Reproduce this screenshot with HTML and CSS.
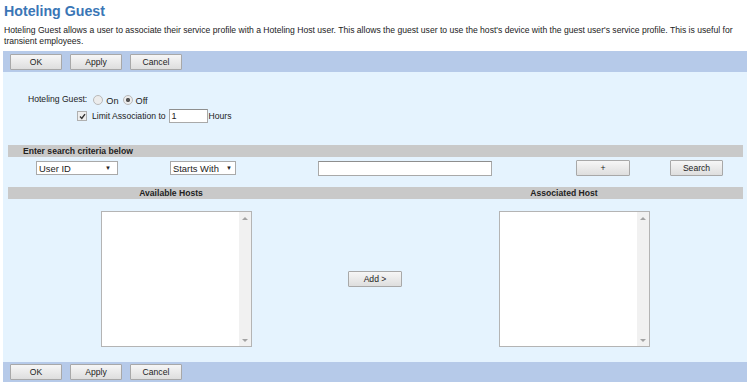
FILE: index.html
```html
<!DOCTYPE html>
<html>
<head>
<meta charset="utf-8">
<link rel="stylesheet" href="styles.css">
</head>
<body>
<div class="page">
  <h1 class="title">Hoteling Guest</h1>
  <p class="desc">Hoteling Guest allows a user to associate their service profile with a Hoteling Host user. This allows the guest user to use the host's device with the guest user's service profile. This is useful for transient employees.</p>

  <div class="toolbar">
    <button class="btn">OK</button>
    <button class="btn">Apply</button>
    <button class="btn">Cancel</button>
  </div>

  <div class="panel">
    <div class="row-guest">
      <span class="lbl">Hoteling Guest:</span>
      <span class="radio"></span><span class="opt">On</span>
      <span class="radio checked"></span><span class="opt">Off</span>
    </div>
    <div class="row-limit">
      <span class="check"><svg width="7" height="7" viewBox="0 0 7 7"><path d="M1 3.6 L2.8 5.4 L6 1.2" fill="none" stroke="#333" stroke-width="1.4"/></svg></span>
      <span class="lbl">Limit Association to</span>
      <span class="txt small">1</span>
      <span class="lbl">Hours</span>
    </div>

    <div class="bar bar-search">Enter search criteria below</div>

    <div class="row-search">
      <span class="sel sel-id"><span>User ID</span><span class="arr">&#9660;</span></span>
      <span class="sel sel-op"><span>Starts With</span><span class="arr">&#9660;</span></span>
      <span class="txt wide"></span>
      <button class="btn btn-plus">+</button>
      <button class="btn btn-search">Search</button>
    </div>

    <div class="bar bar-cols">
      <span class="col-a">Available Hosts</span>
      <span class="col-b">Associated Host</span>
    </div>

    <div class="row-lists">
      <div class="listbox">
        <div class="lb-body"></div>
        <div class="lb-scroll"><span class="up"></span><span class="down"></span></div>
      </div>
      <button class="btn btn-add">Add &gt;</button>
      <div class="listbox">
        <div class="lb-body"></div>
        <div class="lb-scroll"><span class="up"></span><span class="down"></span></div>
      </div>
    </div>
  </div>

  <div class="toolbar bottom">
    <button class="btn">OK</button>
    <button class="btn">Apply</button>
    <button class="btn">Cancel</button>
  </div>
</div>
</body>
</html>
```

FILE: styles.css
```css
html, body {
  margin: 0;
  padding: 0;
  background: #ffffff;
}
body {
  font-family: "Liberation Sans", Arial, sans-serif;
  font-size: 8.6px;
  color: #222;
}
.page {
  padding: 0 3px;
}
.title {
  margin: 2px 0 0 1px;
  font-size: 14.2px;
  line-height: 18px;
  font-weight: bold;
  color: #3a76b6;
  transform-origin: left center;
}
.desc {
  margin: 5px 0 0 1px;
  line-height: 11px;
  color: #222;
}
.toolbar {
  margin-top: 4px;
  height: 21px;
  background: #b6cae9;
  display: flex;
  align-items: center;
  gap: 8px;
  padding-left: 7px;
}
.toolbar.bottom {
  margin-top: 0;
  height: 20px;
}
.btn {
  font-family: "Liberation Sans", Arial, sans-serif;
  font-size: 8.6px;
  color: #222;
  width: 52px;
  height: 16px;
  padding: 0;
  border: 1px solid #a8a8a8;
  border-radius: 1px;
  background: linear-gradient(#f6f6f6, #dedede);
  line-height: 14px;
  text-align: center;
}
.panel {
  background: #e5f3fe;
  padding: 21px 4px 15px 5px;
}
.row-guest {
  height: 12px;
  display: flex;
  align-items: center;
  padding-left: 20px;
}
.lbl {
  white-space: nowrap;
}
.row-guest .lbl {
  margin-right: 6px;
}
.radio {
  width: 8px;
  height: 8px;
  border: 1px solid #b9b9b9;
  border-radius: 50%;
  background: #ececec;
  box-sizing: content-box;
  margin-right: 3px;
  position: relative;
  top: 1px;
}
.radio.checked {
  background: radial-gradient(circle, #555 0 1.8px, #ececec 2.4px);
}
.opt {
  margin-right: 4px;
  font-size: 9.2px;
  position: relative;
  top: 2px;
}
.row-limit {
  margin-top: 4px;
  height: 14px;
  display: flex;
  align-items: center;
  padding-left: 69px;
}
.check {
  width: 8px;
  height: 8px;
  border: 1px solid #b0b0b0;
  background: #eeeeee;
  display: flex;
  align-items: center;
  justify-content: center;
  margin-right: 5px;
}
.txt {
  box-sizing: border-box;
  height: 14px;
  background: #fff;
  border: 1px solid #a9a9a9;
  border-top-color: #8e8e8e;
  padding-left: 2px;
  line-height: 12px;
  font-size: 9px;
}
.txt.small {
  width: 39px;
  margin: 0 1px 0 3px;
}
.bar {
  background: #c9c9c9;
  height: 12px;
  line-height: 12px;
  font-weight: bold;
  color: #222;
}
.bar-search {
  margin-top: 22px;
  padding-left: 15px;
}
.row-search {
  margin-top: 3px;
  height: 16px;
  display: flex;
  align-items: center;
  padding-left: 28px;
}
.sel {
  box-sizing: border-box;
  height: 14px;
  background: #fff;
  border: 1px solid #a9a9a9;
  display: flex;
  align-items: center;
  justify-content: space-between;
  padding: 0 6px 0 2px;
  font-size: 9.4px;
  color: #222;
}
.sel .arr {
  font-size: 6px;
}
.sel-id {
  width: 82px;
}
.sel-op {
  width: 66px;
  margin-left: 52px;
  padding-right: 3px;
}
.txt.wide {
  width: 174px;
  height: 15px;
  margin-left: 82px;
}
.btn-plus {
  width: 54px;
  margin-left: 84px;
}
.btn-search {
  width: 53px;
  margin-left: 40px;
}
.bar-cols {
  margin-top: 11px;
  display: flex;
}
.col-a {
  width: 326px;
  text-align: center;
}
.col-b {
  width: 200px;
  margin-left: 130px;
  text-align: center;
}
.row-lists {
  margin-top: 12px;
  height: 136px;
  display: flex;
  align-items: center;
  padding-left: 93px;
}
.listbox {
  box-sizing: border-box;
  width: 151px;
  height: 136px;
  border: 1px solid #b4b4b4;
  background: #fff;
  display: flex;
}
.lb-body {
  flex: 1;
}
.lb-scroll {
  width: 12px;
  background: #f1f1f1;
  display: flex;
  flex-direction: column;
  justify-content: space-between;
  align-items: center;
  padding: 5px 0 4px;
}
.up, .down {
  width: 0;
  height: 0;
  border-left: 3px solid transparent;
  border-right: 3px solid transparent;
}
.up {
  border-bottom: 3px solid #a3a3a3;
}
.down {
  border-top: 3px solid #a3a3a3;
}
.btn-add {
  width: 54px;
  margin: 0 97px 0 96px;
}
```
